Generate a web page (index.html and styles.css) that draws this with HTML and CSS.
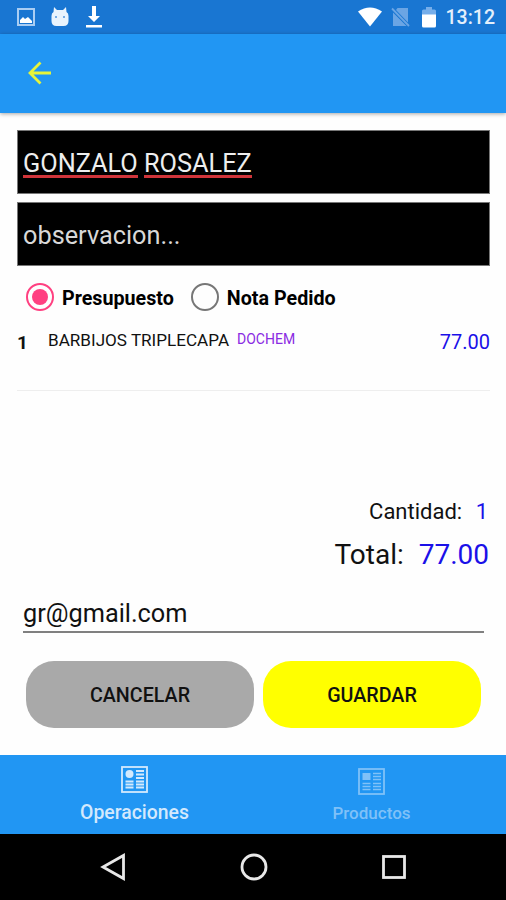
FILE: index.html
```html
<!DOCTYPE html>
<html lang="es">

<head>
    <meta charset="UTF-8">
    <meta name="viewport" content="width=device-width, initial-scale=1.0">
    <title>Operaciones</title>
    <link rel="stylesheet" href="styles.css">
</head>

<body>
    <div class="status">
        <svg class="st-image" width="18" height="18" viewBox="0 0 18 18">
            <rect x="1" y="1" width="16" height="16" fill="none" stroke="#a9cdf3" stroke-width="2"/>
            <path d="M3 15v-3l3-3 2 2 3-2 4 4v2z" fill="#fff"/>
        </svg>
        <svg class="st-cat" width="18" height="20" viewBox="0 0 18 20">
            <path d="M3 0l3 3h6l3-3 .5 5q2 1 2 4v5q0 5-5 5h-7q-5 0-5-5V9q0-3 2-4z" fill="#e9f3fd"/>
            <circle cx="5" cy="10" r="1" fill="#4f94dd"/>
            <circle cx="13" cy="10" r="1" fill="#4f94dd"/>
        </svg>
        <svg class="st-down" width="18" height="22" viewBox="0 0 18 22">
            <path d="M7 0h4v10h4l-6 6-6-6h4zM1 19h16v2.500H1z" fill="#fff"/>
        </svg>
        <div class="status-right">
            <svg width="26" height="20" viewBox="0 0 26 20">
                <path d="M1 4.500Q13-3.500 25 4.500L13 19.500z" fill="#fff"/>
            </svg>
            <svg class="st-sim" width="19" height="20" viewBox="0 0 19 20">
                <path d="M6.500 1H17v14.500L5 3zM2 5.500L15.500 19H2z" fill="#6ba5e4"/>
                <path d="M1 1.500L18 19" stroke="#6ba5e4" stroke-width="1.800"/>
            </svg>
            <svg class="st-bat" width="14" height="21" viewBox="0 0 14 21">
                <path d="M0 8V4q0-1.500 1.500-1.500H4V0h6v2.500h2.500Q14 2.500 14 4v4z" fill="#76aeea"/>
                <path d="M0 7.500h14V19q0 1.500-1.500 1.500h-11Q0 20.500 0 19z" fill="#fff"/>
            </svg>
            <span class="clock">13:12</span>
        </div>
    </div>

    <header class="toolbar">
        <svg width="24" height="24" viewBox="0 0 24 24">
            <path d="M23 12H2M12.500 1.500L2 12l10.500 10.500" fill="none" stroke="#e6f43a" stroke-width="2.800"/>
        </svg>
    </header>

    <main class="content">
        <div class="field name"><span class="misspelled">GONZALO</span> <span class="misspelled">ROSALEZ</span></div>
        <div class="field note">observacion...</div>

        <div class="options">
            <span class="radio checked"></span>
            <span class="option">Presupuesto</span>
            <span class="radio"></span>
            <span class="option">Nota Pedido</span>
        </div>

        <div class="item">
            <span class="qty">1</span>
            <span class="product">BARBIJOS TRIPLECAPA</span>
            <span class="brand">DOCHEM</span>
            <span class="price">77.00</span>
        </div>

        <div class="totals">
            <div class="count">Cantidad: <span class="value">1</span></div>
            <div class="total">Total: <span class="value">77.00</span></div>
        </div>

        <div class="email">gr@gmail.com</div>

        <div class="buttons">
            <button class="btn cancel">CANCELAR</button>
            <button class="btn save">GUARDAR</button>
        </div>
    </main>

    <nav class="tabs">
        <div class="tab active">
            <svg width="27" height="27" viewBox="0 0 27 27">
                <rect x="1" y="1" width="25" height="25" fill="none" stroke="currentColor" stroke-width="1.800"/>
                <circle cx="8.500" cy="8" r="4" fill="currentColor"/>
                <path d="M15 5h8M15 8.500h8M15 12h8M4.500 15.500h8M4.500 18.500h8M4.500 21.500h8M15 15.500h8M15 18.500h8M15 21.500h8" stroke="currentColor" stroke-width="2"/>
            </svg>
            <span>Operaciones</span>
        </div>
        <div class="tab">
            <svg width="27" height="27" viewBox="0 0 27 27">
                <rect x="1" y="1" width="25" height="25" fill="none" stroke="currentColor" stroke-width="1.800"/>
                <path d="M4.500 5h8v7h-8z" fill="currentColor"/>
                <path d="M15 5.500h8M15 8.500h8M15 11.500h8M4.500 15.500h8M4.500 18.500h8M4.500 21.500h8M15 15.500h8M15 18.500h8M15 21.500h8" stroke="currentColor" stroke-width="1.700"/>
            </svg>
            <span>Productos</span>
        </div>
    </nav>

    <div class="system">
        <svg width="28" height="28" viewBox="0 0 28 28">
            <path d="M24.500 2.500v23L4 14z" fill="none" stroke="#e8e8e8" stroke-width="2.800"/>
        </svg>
        <svg width="28" height="28" viewBox="0 0 28 28">
            <circle cx="14" cy="14" r="12" fill="none" stroke="#e8e8e8" stroke-width="2.800"/>
        </svg>
        <svg width="28" height="28" viewBox="0 0 28 28">
            <rect x="3.500" y="3.500" width="21" height="21" fill="none" stroke="#e8e8e8" stroke-width="2.800"/>
        </svg>
    </div>
</body>

</html>
```
FILE: styles.css
```css
* {
    box-sizing: border-box;
}

body {
    margin: 0;
    width: 506px;
    height: 900px;
    display: flex;
    flex-direction: column;
    overflow: hidden;
    background: #fefefe;
    color: #111;
    font-family: Roboto, sans-serif;
}

svg {
    display: block;
    flex: none;
}

.status {
    height: 34px;
    flex: none;
    display: flex;
    align-items: center;
    padding: 0 11px 0 17px;
    background: #1976d2;
}

.st-cat {
    margin-left: 16px;
}

.st-down {
    margin-left: 16px;
}

.status-right {
    display: flex;
    align-items: center;
    margin-left: auto;
}

.st-sim {
    margin-left: 8px;
}

.st-bat {
    margin-left: 12px;
}

.clock {
    margin-left: 10px;
    color: #e4effb;
    font-size: 19.5px;
    font-weight: 500;
    line-height: 34px;
    padding-top: 2px;
}

.toolbar {
    height: 79px;
    flex: none;
    display: flex;
    align-items: center;
    padding: 0 0 2px 28px;
    background: #2196f3;
    box-shadow: 0 1px 4px rgba(0, 0, 0, 0.35);
}

.content {
    flex: 1;
    padding: 17px 16px 0 17px;
}

.field {
    height: 64px;
    margin-bottom: 8px;
    padding-left: 5px;
    border: 1px solid #777;
    background: #000;
    color: #eee;
    font-size: 25.3px;
    line-height: 65px;
    white-space: nowrap;
}

.note {
    color: #d8d8d8;
}

.misspelled {
    display: inline-block;
    height: 30px;
    border-bottom: 3px solid #d0343a;
    line-height: 32px;
}

.options {
    height: 28px;
    display: flex;
    align-items: center;
    margin-top: 17px;
    padding-left: 9px;
}

.radio {
    width: 28px;
    height: 28px;
    padding: 4px;
    border: 2.500px solid #777;
    border-radius: 50%;
}

.checked {
    border-color: #ff4081;
    background: #ff4081 content-box;
}

.option {
    margin: 2px 17px 0 8px;
    color: #000;
    font-size: 19.7px;
    font-weight: 700;
}

.item {
    height: 80px;
    display: flex;
    align-items: flex-start;
    border-bottom: 1px solid #eee;
    line-height: 24px;
}

.qty {
    width: 31px;
    padding-top: 20px;
    font-size: 19px;
    font-weight: 700;
}

.product {
    padding-top: 17px;
    font-size: 17.1px;
}

.brand {
    margin-left: 8px;
    padding-top: 16px;
    color: #8a2be2;
    font-size: 14px;
}

.price {
    margin-left: auto;
    padding-top: 19px;
    color: #1a10e8;
    font-size: 20px;
}

.totals {
    margin-top: 106px;
    text-align: right;
}

.count {
    height: 30px;
    padding-right: 2px;
    font-size: 22px;
    line-height: 30px;
}

.total {
    height: 36px;
    margin-top: 10px;
    padding-right: 1px;
    font-size: 28px;
    line-height: 36px;
}

.value {
    margin-left: 8px;
    color: #1a10e8;
}

.email {
    height: 39px;
    margin: 21px 6px 0;
    border-bottom: 2px solid #808080;
    font-size: 25.3px;
    line-height: 40px;
}

.buttons {
    display: flex;
    gap: 9px;
    margin: 28px 8px 0 9px;
}

.btn {
    height: 67px;
    padding: 2px 0 0;
    border: none;
    border-radius: 28px;
    color: #111;
    font-family: inherit;
    font-size: 19.7px;
    font-weight: 500;
}

.cancel {
    width: 228px;
    background: #a9a9a9;
}

.save {
    width: 218px;
    background: #ff0;
}

.tabs {
    height: 79px;
    flex: none;
    display: flex;
    padding: 0 16px;
    background: #2196f3;
}

.tab {
    flex: 1;
    display: flex;
    flex-direction: column;
    align-items: center;
    padding-top: 13px;
    color: #7fc1f8;
    font-size: 17px;
    font-weight: 500;
    line-height: 24px;
}

.tab span {
    margin-top: 6px;
}

.active {
    padding-top: 11px;
    color: #d3e9fd;
    font-size: 19.4px;
}

.active span {
    margin-top: 8px;
}

.system {
    height: 66px;
    flex: none;
    display: flex;
    align-items: center;
    justify-content: space-between;
    padding: 0 98px 0 99px;
    background: #000;
}
```
